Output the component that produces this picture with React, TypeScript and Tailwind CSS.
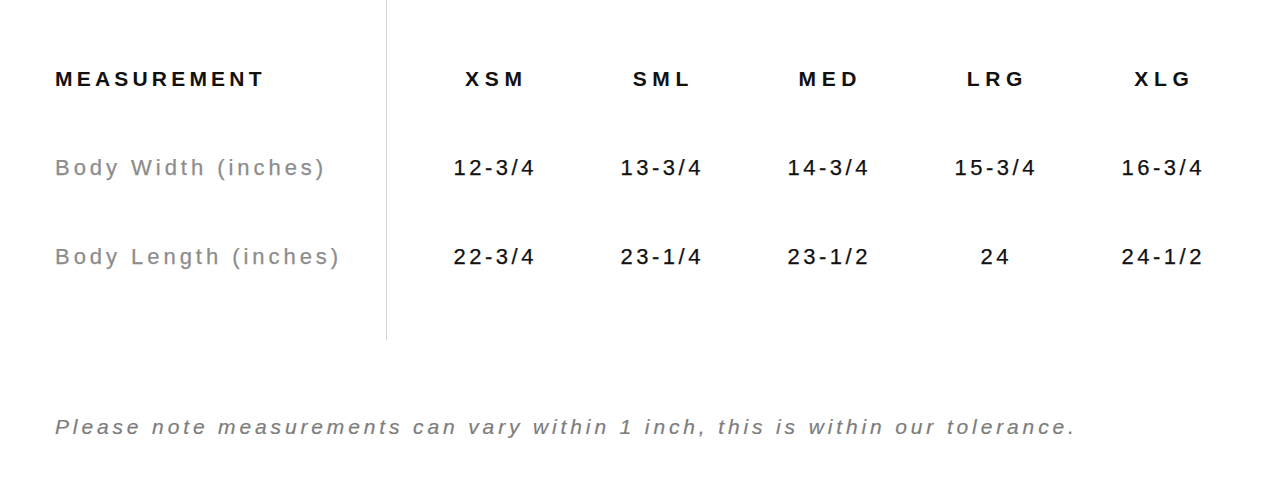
const sizes = ["XSM", "SML", "MED", "LRG", "XLG"];

const rows = [
  { label: "Body Width (inches)", values: ["12-3/4", "13-3/4", "14-3/4", "15-3/4", "16-3/4"] },
  { label: "Body Length (inches)", values: ["22-3/4", "23-1/4", "23-1/2", "24", "24-1/2"] },
];

export default function App() {
  return (
    <div className="w-full h-[498px] bg-white font-['Liberation_Sans',Arial,sans-serif]">
      <div className="flex">
        {/* label column */}
        <div className="w-[387px] border-r border-[#d6d6d6] pl-[55px] pt-[34px] pb-[39px]">
          <div className="h-[89px] flex items-center text-[21px] font-bold tracking-[0.2em] text-[#111]">
            MEASUREMENT
          </div>
          {rows.map((r) => (
            <div key={r.label} className="h-[89px] flex items-center text-[22px] tracking-[0.18em] text-[#8c8c8c] [-webkit-text-stroke:0.25px_#8c8c8c]">
              {r.label}
            </div>
          ))}
        </div>

        {/* size columns */}
        <div className="pl-[23px] pt-[34px] pb-[39px]">
          <div className="grid grid-cols-[repeat(5,167px)] h-[89px] items-center">
            {sizes.map((s) => (
              <div key={s} className="text-center text-[21px] font-bold tracking-[0.27em] text-[#111] pl-[0.27em]">
                {s}
              </div>
            ))}
          </div>
          {rows.map((r) => (
            <div key={r.label} className="grid grid-cols-[repeat(5,167px)] h-[89px] items-center">
              {r.values.map((v, i) => (
                <div key={i} className="text-center text-[22px] tracking-[0.16em] text-[#111] pl-[0.16em] [-webkit-text-stroke:0.25px_#111]">
                  {v}
                </div>
              ))}
            </div>
          ))}
        </div>
      </div>

      <p className="pl-[55px] mt-[75px] text-[21px] italic tracking-[0.184em] text-[#7d7d7d] leading-6 [-webkit-text-stroke:0.2px_#7d7d7d]">
        Please note measurements can vary within 1 inch, this is within our tolerance.
      </p>
    </div>
  );
}
